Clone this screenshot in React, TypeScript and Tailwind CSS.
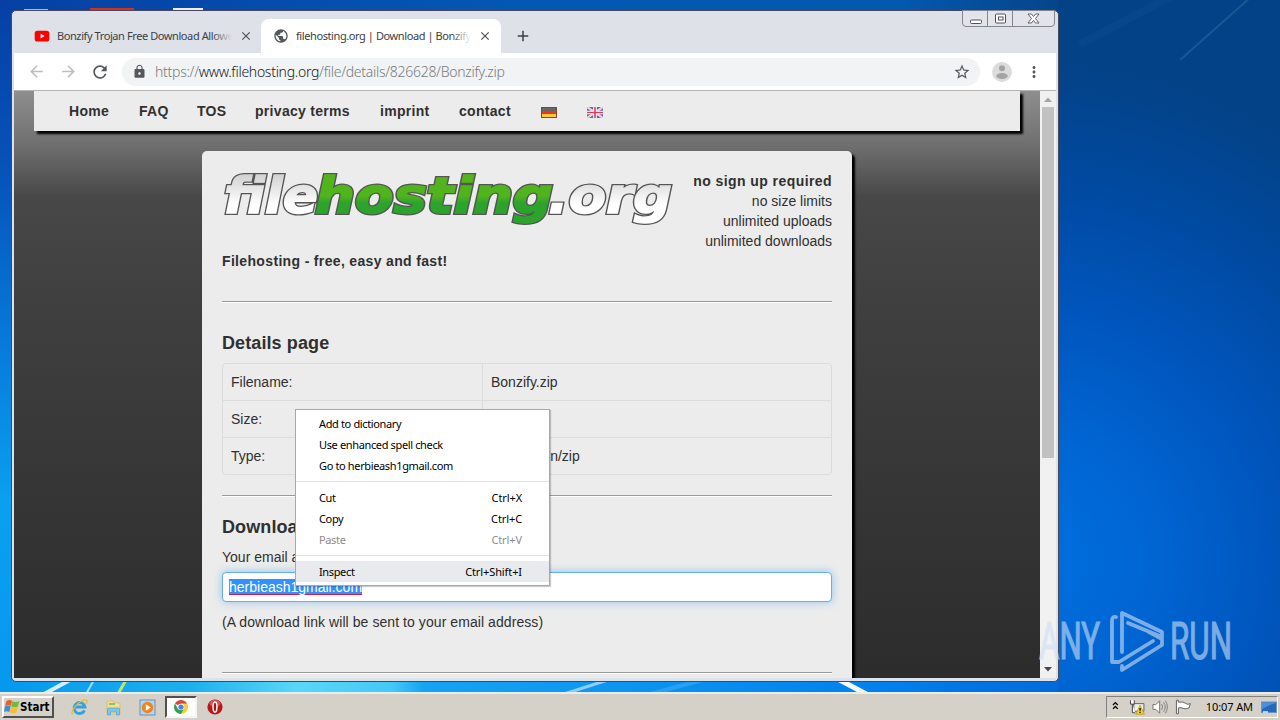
import { ReactNode } from "react";
import {
  MdAdd,
  MdArrowBack,
  MdArrowForward,
  MdClose,
  MdLock,
  MdMoreVert,
  MdPublic,
  MdRefresh,
  MdStarBorder,
} from "react-icons/md";

interface NavItem {
  label: string;
  width: string;
}

interface MenuEntry {
  label: string;
  shortcut?: string;
  disabled?: boolean;
  active?: boolean;
}

const navItems: NavItem[] = [
  { label: "Home", width: "w-[40px]" },
  { label: "FAQ", width: "w-[28px]" },
  { label: "TOS", width: "w-[28px]" },
  { label: "privacy terms", width: "w-[95px]" },
  { label: "imprint", width: "w-[49px]" },
  { label: "contact", width: "w-[52px]" },
];

const details = [
  { name: "Filename:", value: "Bonzify.zip" },
  { name: "Size:", value: "6.4 MB" },
  { name: "Type:", value: "application/zip" },
];

// Menu entries are split into groups, a separator goes between them
const menuGroups: MenuEntry[][] = [
  [
    { label: "Add to dictionary" },
    { label: "Use enhanced spell check" },
    { label: "Go to herbieash1gmail.com" },
  ],
  [
    { label: "Cut", shortcut: "Ctrl+X" },
    { label: "Copy", shortcut: "Ctrl+C" },
    { label: "Paste", shortcut: "Ctrl+V", disabled: true },
  ],
  [{ label: "Inspect", shortcut: "Ctrl+Shift+I", active: true }],
];

const Wallpaper = () => (
  <svg className="absolute inset-0" width="1280" height="720" viewBox="0 0 1280 720">
    <defs>
      <linearGradient id="base" x1="0" y1="0" x2="0" y2="1">
        <stop offset="0" stopColor="#0640a4" />
        <stop offset="0.25" stopColor="#0654bc" />
        <stop offset="0.5" stopColor="#087edc" />
        <stop offset="0.7" stopColor="#0aa0f0" />
        <stop offset="1" stopColor="#0498ee" />
      </linearGradient>
      <radialGradient id="right" cx="1020" cy="560" r="500" gradientUnits="userSpaceOnUse">
        <stop offset="0" stopColor="#0070e0" />
        <stop offset="0.25" stopColor="#0066d4" />
        <stop offset="0.5" stopColor="#0056be" />
        <stop offset="0.75" stopColor="#004aa2" />
        <stop offset="1" stopColor="#034286" />
      </radialGradient>
      <linearGradient id="strip" x1="0" y1="0" x2="1060" y2="0" gradientUnits="userSpaceOnUse">
        <stop offset="0" stopColor="#0498ee" />
        <stop offset="0.18" stopColor="#1cb0f0" />
        <stop offset="0.28" stopColor="#58d8f8" />
        <stop offset="0.37" stopColor="#44c8f8" />
        <stop offset="0.4" stopColor="#14a4f4" />
        <stop offset="0.84" stopColor="#0080ee" />
        <stop offset="1" stopColor="#006adc" />
      </linearGradient>
      <linearGradient id="top" x1="0" y1="0" x2="1060" y2="0" gradientUnits="userSpaceOnUse">
        <stop offset="0" stopColor="#0640a4" />
        <stop offset="0.5" stopColor="#0458b4" />
        <stop offset="0.85" stopColor="#0458b0" />
        <stop offset="1" stopColor="#06448a" />
      </linearGradient>
    </defs>
    <rect width="1058" height="720" fill="url(#base)" />
    <rect x="1050" width="230" height="720" fill="url(#right)" />
    <rect width="1058" height="14" fill="url(#top)" />
    <rect y="680" width="1058" height="14" fill="url(#strip)" />
    <path d="M1180 60 1252 -4" stroke="#6ba0d0" strokeOpacity="0.22" strokeWidth="2" />
    <path d="M1080 44 1180 -8" stroke="#4a86c0" strokeOpacity="0.07" strokeWidth="8" />
    <path d="M44 694 70 680" stroke="#d4f0fc" strokeWidth="4" />
    <path d="m86 694 8-14" stroke="#9ce0f8" strokeWidth="2" />
    <path d="m118 694 8-14" stroke="#b8e870" strokeWidth="3" />
    <path d="m564 694 50-16" stroke="#8cd0fc" strokeWidth="3" />
    <path d="m650 694 60-16" stroke="#3cacf8" strokeWidth="4" strokeOpacity="0.6" />
    <path d="m836 678 34 18" stroke="#f4faff" strokeWidth="5" />
    <path d="M24 9h24v3h-24z" fill="#a8bcd0" />
    <path d="M90 8h44v4H90z" fill="#d43020" />
    <path d="M173 8h30v4h-30z" fill="#e8f0f4" />
  </svg>
);

const Tab = ({ icon, title, active }: { icon: ReactNode; title: string; active?: boolean }) => (
  <div
    className={
      active
        ? "flex h-[34px] w-[240px] items-center rounded-t-lg bg-white pr-2 pl-3"
        : "flex h-[34px] w-[239px] items-center pr-2 pl-3"
    }
  >
    {icon}
    <div className="relative ml-[7px] w-[175px] shrink-0 overflow-hidden pt-px text-[11px] tracking-[-0.41px] whitespace-nowrap text-[#3c4043]">
      {title}
      <div
        className={
          active
            ? "absolute inset-y-0 right-0 w-5 bg-linear-to-r from-transparent to-white"
            : "absolute inset-y-0 right-0 w-5 bg-linear-to-r from-transparent to-[#dee1e8]"
        }
      />
    </div>
    <MdClose className="ml-[7px] size-[14px] shrink-0 text-[#4c5054]" />
  </div>
);

const YoutubeIcon = () => (
  <svg className="size-4 shrink-0" viewBox="0 0 16 16">
    <rect x="0.7" y="2.7" width="14.6" height="10.8" rx="2.6" fill="#f00" />
    <path d="m6.6 5.7 4 2.4-4 2.4z" fill="#fff" />
  </svg>
);

const CaptionButtons = () => (
  <div className="absolute -top-px right-[3px] flex h-[17px] overflow-hidden rounded-b-[4px] border border-[#85858e] bg-[#e2e4ea]">
    <div className="flex w-[25px] items-center justify-center border-r border-[#85858e]">
      <svg width="13" height="13" viewBox="0 0 13 13" fill="#fff" stroke="#50505c">
        <rect x="1.5" y="8" width="11" height="3.5" rx="1" />
      </svg>
    </div>
    <div className="flex w-[25px] items-center justify-center border-r border-[#85858e]">
      <svg width="13" height="13" viewBox="0 0 13 13" fill="#fff" stroke="#50505c">
        <rect x="1.5" y="2" width="10" height="9" rx="1" />
        <rect x="4.5" y="5" width="4.5" height="3" />
      </svg>
    </div>
    <div className="flex w-[41px] items-center justify-center">
      <svg width="13" height="13" viewBox="0 0 13 13" fill="#fff" stroke="#50505c">
        <path d="M1 2h3.400l2.100 2.500L8.600 2H12L8.500 6.500 12 11H8.600L6.500 8.500 4.400 11H1l3.500-4.500z" strokeWidth="0.9" />
      </svg>
    </div>
  </div>
);

// Each word is drawn twice: a wide dark outline first, then the filled letters
const LogoWord = ({ x, width, fill, children }: { x: number; width: number; fill: string; children: string }) => (
  <>
    <text x={x} y="41.500" textLength={width} lengthAdjust="spacingAndGlyphs" fill="#555" stroke="#555" strokeWidth="4">
      {children}
    </text>
    <text x={x} y="41.500" textLength={width} lengthAdjust="spacingAndGlyphs" fill={fill} stroke={fill} strokeWidth="1.400">
      {children}
    </text>
  </>
);

const Logo = () => (
  <svg className="h-[60px] w-[455px]" viewBox="0 0 455 60">
    <defs>
      <linearGradient id="silver" x1="0" y1="4" x2="0" y2="54" gradientUnits="userSpaceOnUse">
        <stop offset="0" stopColor="#d2d2d2" />
        <stop offset="0.600" stopColor="#fff" />
      </linearGradient>
      <linearGradient id="green" x1="0" y1="4" x2="0" y2="54" gradientUnits="userSpaceOnUse">
        <stop offset="0" stopColor="#54b41c" />
        <stop offset="0.420" stopColor="#50b41c" />
        <stop offset="0.560" stopColor="#2ca42c" />
      </linearGradient>
    </defs>
    <g className="font-['DejaVu_Sans'] text-[49px] font-bold italic" strokeLinejoin="miter">
      <LogoWord x={2} width={94} fill="url(#silver)">
        file
      </LogoWord>
      <LogoWord x={326} width={124} fill="url(#silver)">
        .org
      </LogoWord>
      <LogoWord x={93} width={238} fill="url(#green)">
        hosting
      </LogoWord>
    </g>
  </svg>
);

const GermanFlag = () => (
  <svg width="16" height="11" viewBox="0 0 16 11">
    <rect width="16" height="11" fill="#7c4c28" />
    <path d="M1 1h14v3H1z" fill="#666" />
    <path d="M1 4h14v3H1z" fill="#e83820" />
    <path d="M1 7h14v3H1z" fill="#fcc840" />
  </svg>
);

const BritishFlag = () => (
  <svg width="16" height="11" viewBox="0 0 16 11">
    <rect width="16" height="11" fill="#6464a8" />
    <path d="m0 0 16 11M16 0 0 11" stroke="#f4f0f8" strokeWidth="2.2" />
    <path d="m0 0 16 11M16 0 0 11" stroke="#e0a0b4" strokeWidth="0.7" />
    <path d="M8 0v11M0 5.500h16" stroke="#fff" strokeWidth="3.6" />
    <path d="M8 0v11M0 5.500h16" stroke="#dc3c54" strokeWidth="1.600" />
  </svg>
);

const Divider = () => <div className="h-[2px] border-t border-b border-t-[#9a9a9a] border-b-white" />;

const ContextMenu = () => (
  <div className="absolute top-[409px] left-[295px] h-[177px] w-[255px] border border-[#a8a8a8] bg-white pt-1 font-['Noto_Sans'] text-[11px] tracking-[-0.36px] text-black shadow-[1px_1px_1px_rgba(0,0,0,0.2)]">
    {menuGroups.map((group, i) => (
      <div key={i}>
        {i > 0 && (
          <div className={i === 1 ? "h-[11px] pt-[4px]" : "h-[10px] pt-[4px]"}>
            <div className="h-px bg-[#e2e2e2]" />
          </div>
        )}
        {group.map((entry) => (
          <div
            key={entry.label}
            className={
              "flex h-[21px] items-center justify-between pr-[27px] pl-[23px] " +
              (entry.active ? "bg-[#e8eaed] pt-px " : "") +
              (entry.disabled ? "text-[#8c8c8c]" : "")
            }
          >
            <span>{entry.label}</span>
            <span className="tracking-[-0.1px]">{entry.shortcut}</span>
          </div>
        ))}
      </div>
    ))}
  </div>
);

const FilehostingPage = () => (
  <div className="h-[587px] w-[1026px] overflow-hidden bg-[linear-gradient(#8e8e8e_0px,#727272_50px,#484848_105px,#404040_200px,#2c2c2c_587px)] font-['Liberation_Sans'] text-sm leading-5 text-[#303030]">
    <div className="mx-5 flex h-10 items-center gap-[30px] bg-[#ececec] pl-[35px] font-bold tracking-[0.3px] whitespace-nowrap shadow-[3px_3px_2px_#000]">
      {navItems.map((item) => (
        <a key={item.label} className={item.width}>
          {item.label}
        </a>
      ))}
      <div className="mt-[3px]">
        <GermanFlag />
      </div>
      <div className="mt-[3px]">
        <BritishFlag />
      </div>
    </div>
    <div className="mx-auto mt-5 h-[600px] w-[650px] rounded-[5px] bg-[#ececec] p-5 shadow-[3px_3px_2px_#000]">
      <div className="flex h-20 justify-between">
        <Logo />
        <div className="text-right whitespace-nowrap">
          <p className="font-bold tracking-[0.42px]">no sign up required</p>
          <p>no size limits</p>
          <p>unlimited uploads</p>
          <p>unlimited downloads</p>
        </div>
      </div>
      <p className="mb-[30px] font-bold tracking-[0.34px]">Filehosting - free, easy and fast!</p>
      <Divider />
      <h2 className="mt-[30px] h-[30px] text-lg leading-5 font-bold tracking-[0.1px]">Details page</h2>
      <div className="mt-0 rounded border border-[#dcdcdc]">
        {details.map((row, i) => (
          <div
            key={row.name}
            className={i > 0 ? "flex h-[37px] border-t border-[#dcdcdc]" : "flex h-9"}
          >
            <div className="w-[259px] pt-2 pl-2">{row.name}</div>
            <div className="flex-1 border-l border-[#dcdcdc] pt-2 pl-2">{row.value}</div>
          </div>
        ))}
      </div>
      <div className="mt-5">
        <Divider />
      </div>
      <h2 className="mt-5 h-[30px] text-lg leading-5 font-bold tracking-[0.1px]">Download</h2>
      <p className="h-[25px]">Your email address:</p>
      <div className="flex h-[30px] items-center rounded border border-[#66afe9] bg-white px-1.5 shadow-[0_0_8px_rgba(82,168,236,0.6)]">
        <span className="h-4 bg-[#3390ff] leading-4 text-white underline decoration-[#d02040] decoration-1 underline-offset-2">
          herbieash1gmail.com
        </span>
      </div>
      <p className="mt-2.5 mb-10 tracking-[0.07px]">(A download link will be sent to your email address)</p>
      <Divider />
    </div>
  </div>
);

const Scrollbar = () => (
  <div className="flex w-4 flex-col items-center justify-between bg-[#f1f1f1]">
    <svg width="16" height="16" viewBox="0 0 16 16">
      <path d="m4 11 4-4.500 4 4.500z" fill="#a3a3a3" />
    </svg>
    <div className="mb-auto h-[351px] w-[12px] bg-[#c1c1c1]" />
    <svg width="16" height="18" viewBox="0 0 16 18">
      <path d="m4 7 4 4.500 4-4.500z" fill="#484848" />
    </svg>
  </div>
);

const BrowserWindow = () => (
  <div className="absolute top-[10px] left-[11px] h-[672px] w-[1048px] rounded-[5px] border border-[#484858] bg-[#dee1e8] px-[2px]">
    <div className="flex h-[42px] items-end pl-2 font-['Noto_Sans']">
      <Tab icon={<YoutubeIcon />} title="Bonzify Trojan Free Download Allowed" />
      <Tab
        icon={<MdPublic className="size-4 shrink-0 text-[#54585c]" />}
        title="filehosting.org | Download | Bonzify.zip"
        active
      />
      <MdAdd className="mb-2 ml-[13px] size-[18px] text-[#3c4043]" />
      <CaptionButtons />
    </div>
    <div className="flex h-[38px] items-center border-b border-[#b4b4b4] bg-white pl-[13px] text-[#54585c]">
      <MdArrowBack className="size-[19px] text-[#bcbec2]" />
      <MdArrowForward className="ml-[13px] size-[19px] text-[#bcbec2]" />
      <MdRefresh className="ml-[12px] size-[20px]" />
      <div className="ml-3 flex h-7 w-[858px] items-center rounded-full bg-[#f1f3f4] pl-2.5 font-['Noto_Sans'] text-[14px] font-light tracking-[-0.28px]">
        <MdLock className="size-[15px]" />
        <span className="ml-[8px] text-[#757b80]">
          https://<span className="text-[#202124]">www.filehosting.org</span>/file/details/826628/Bonzify.zip
        </span>
        <MdStarBorder className="mr-[9px] ml-auto size-[18px]" />
      </div>
      <svg className="ml-3 size-5" viewBox="0 0 20 20">
        <circle cx="10" cy="10" r="10" fill="#dcdcdc" />
        <circle cx="10" cy="6.300" r="3" fill="#a4a4a4" />
        <ellipse cx="10" cy="14" rx="5.800" ry="3" fill="#a4a4a4" />
      </svg>
      <MdMoreVert className="ml-[13px] size-[18px]" />
    </div>
    <div className="flex h-[587px]">
      <FilehostingPage />
      <Scrollbar />
    </div>
  </div>
);

const Watermark = () => (
  <svg className="absolute top-[600px] left-[1036px]" width="204" height="80" viewBox="0 0 204 80" opacity="0.6">
    <g className="font-['Roboto'] text-[51px]" fill="#cfe0f4" stroke="#cfe0f4" strokeWidth="1.200">
      <text x="3" y="59" textLength="61" lengthAdjust="spacingAndGlyphs">
        ANY
      </text>
      <text x="134" y="59" textLength="62" lengthAdjust="spacingAndGlyphs">
        RUN
      </text>
    </g>
    <g fill="none" stroke="#cfe0f4" strokeWidth="3.800" strokeLinecap="round" strokeLinejoin="round">
      <path d="M80 17Q76 16 76 21V62H83L117 41" />
      <path d="M86 52V13L126 32V37L92 23" />
      <path d="M86 66V70L126 45V39L113 32" />
    </g>
  </svg>
);

const StartLogo = () => (
  <svg className="shrink-0" width="16" height="16" viewBox="0 0 16 16">
    <path d="M2.500 2q3-1.800 5.500-.2L6.800 7Q4.500 5.500 1.200 7z" fill="#e8602c" />
    <path d="M8.300 2.300q3 1.400 7 0L14 7.600q-3 1.400-6.800 0z" fill="#74b83c" />
    <path d="M1 7.600q3-1.500 5.600 0l-1.300 5.400q-2.500-1.600-5.300-.2z" fill="#3c8cd8" />
    <path d="M7.100 8.100q3 1.400 6.700 0L12.500 13.500q-3 1.400-6.500 0z" fill="#f4c030" />
  </svg>
);

const Taskbar = () => (
  <div className="absolute inset-x-0 bottom-0 flex h-7 items-center border-t-2 border-[#ecebe6] bg-[#d5d0c8] font-['Noto_Sans'] text-[11px] text-black">
    <div className="ml-0.5 flex h-[22px] w-[52px] items-center border-2 border-t-white border-r-[#505050] border-b-[#505050] border-l-white">
      <StartLogo />
      <span className="pt-px font-['DejaVu_Sans_Condensed'] text-[11.5px] font-bold">Start</span>
    </div>
    <svg className="ml-[17px]" width="17" height="18" viewBox="0 0 17 18">
      <path d="M13.500 12.500A5.500 5.500 0 1 1 14 9H4.500" fill="none" stroke="#38a0dc" strokeWidth="2.800" />
      <path d="M1.500 16.500C-1 13 9 1 15.500 2q1.500 1-.5 4" fill="none" stroke="#e8bc38" strokeWidth="1.300" />
    </svg>
    <svg className="ml-[17px]" width="17" height="17" viewBox="0 0 17 17">
      <path d="M2 2h6l1 2h6v11H2z" fill="#f4e08c" stroke="#d8bc60" strokeWidth="0.800" />
      <path d="M4 4h6v2H4z" fill="#84c478" />
      <path d="M2.500 16v-6q0-1 1-1h10q1 0 1 1v6h-3v-3h-6v3z" fill="#80c4ec" stroke="#58a0cc" strokeWidth="0.700" />
    </svg>
    <svg className="ml-[17px]" width="17" height="17" viewBox="0 0 17 17">
      <rect x="1" y="1" width="15" height="15" fill="#b8d4ec" stroke="#5c94c8" />
      <circle cx="8.500" cy="8.500" r="5.700" fill="#f08418" />
      <path d="m6.800 5.300 5 3.200-5 3.200z" fill="#fff" />
    </svg>
    <div className="ml-[9px] flex h-[22px] w-8 items-center justify-center border-2 border-t-[#505050] border-r-[#f4f4f4] border-b-[#f4f4f4] border-l-[#505050] bg-white">
      <svg width="14" height="14" viewBox="0 0 16 16">
        <path d="M8 8 1.100 4A8 8 0 0 1 14.900 4z" fill="#dc4434" />
        <path d="M8 8V4h6.900A8 8 0 0 1 8 16l3.500-6z" fill="#fccc30" />
        <path d="m8 8 3.500 2L8 16A8 8 0 0 1 1.100 4l3.400 6z" fill="#2ca050" />
        <circle cx="8" cy="8" r="3.800" fill="#fff" />
        <circle cx="8" cy="8" r="3" fill="#4484f0" />
      </svg>
    </div>
    <svg className="ml-[10px]" width="16" height="16" viewBox="0 0 16 16">
      <circle cx="8" cy="8" r="7.600" fill="#b81818" />
      <ellipse cx="8" cy="4.500" rx="5.500" ry="3.500" fill="#e05050" />
      <ellipse cx="8" cy="8" rx="1.900" ry="5" fill="#b01010" stroke="#fff" strokeWidth="1.500" />
    </svg>
    <div className="mr-0.5 ml-auto flex h-[22px] w-[172px] items-center border border-t-[#808080] border-r-white border-b-white border-l-[#808080] pl-[5px]">
      <svg className="mb-1" width="7" height="9" viewBox="0 0 7 9" fill="none" stroke="#000" strokeWidth="1.300">
        <path d="m1 4 2.500-2.500L6 4M1 8l2.500-2.500L6 8" />
      </svg>
      <svg className="ml-2.5" width="17" height="16" viewBox="0 0 17 16">
        <path d="M5 4.500h10.500v8H5z" fill="#f0f0e8" stroke="#606060" />
        <path d="M1.500 1v4h4V1M3.500 5v9h3" fill="#fff" stroke="#404040" />
        <path d="m11.500 6 4.500 9.500H7z" fill="#f4d020" stroke="#b89410" strokeWidth="0.700" />
        <path d="M11.500 9v3M11.500 13v1.200" stroke="#000" strokeWidth="1.300" />
      </svg>
      <svg className="ml-[7px]" width="17" height="16" viewBox="0 0 17 16">
        <path d="M1 5.500h3l4-4v13l-4-4H1z" fill="#fff" stroke="#707070" />
        <path d="M10 5q2 3 0 6M12 3q3.500 5 0 10M14 1.500q4 6.500 0 13" fill="none" stroke="#808080" />
      </svg>
      <svg className="ml-[7px]" width="17" height="16" viewBox="0 0 17 16">
        <path d="M1.500 1v14h2v-6q3-1 5 .5 3 1 6-.5l1.500-4.500q-3 1.500-5-.2-1.800-2.300-7.500-1.300V1z" fill="#fff" stroke="#606060" />
      </svg>
      <span className="ml-[14px] pt-px tracking-[-0.1px] whitespace-nowrap">10:07 AM</span>
      <svg className="ml-2 shrink-0" width="16" height="13" viewBox="0 0 16 13">
        <rect x="0.500" y="1" width="15" height="10.500" fill="#2868bc" stroke="#6c94c4" />
        <path d="M1 8q7-4 14-6V1.500H1z" fill="#4c90dc" />
        <path d="M2 11h5" stroke="#dcecf8" strokeWidth="1.500" />
      </svg>
    </div>
  </div>
);

const App = () => {
  return (
    <div className="relative h-[720px] w-[1280px] overflow-hidden bg-[#0058b8]">
      <Wallpaper />
      <BrowserWindow />
      <ContextMenu />
      <Watermark />
      <Taskbar />
    </div>
  );
};

export default App;
